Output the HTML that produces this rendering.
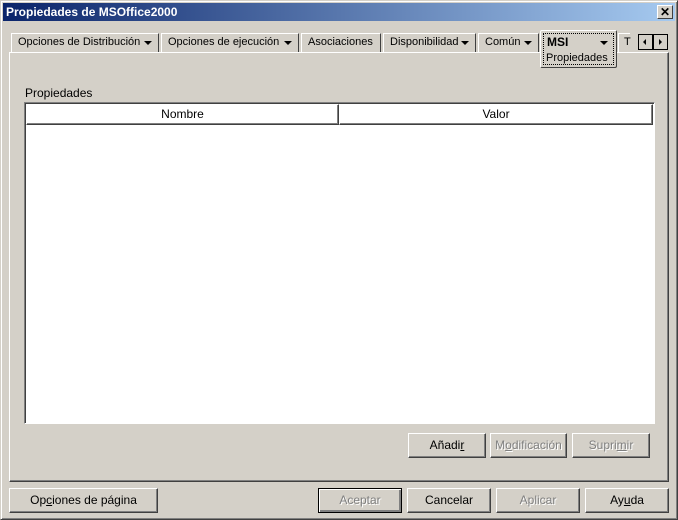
<!DOCTYPE html><html><head><style>
*{box-sizing:border-box;margin:0;padding:0}
body{width:678px;height:520px;background:#d4d0c8;font-family:"Liberation Sans",sans-serif;font-size:11px;color:#000;position:relative;overflow:hidden}
.win{position:absolute;left:0;top:0;width:678px;height:520px;border:1px solid;border-color:#d4d0c8 #404040 #404040 #d4d0c8;box-shadow:inset 1px 1px #fff,inset -1px -1px #808080}
.title{position:absolute;left:3px;top:3px;width:672px;height:18px;background:linear-gradient(90deg,#0a246a,#a6caf0);color:#fff;font-weight:bold;font-size:12px;line-height:18px;padding-left:3px}
.x{position:absolute;right:5px;top:5px;width:16px;height:14px;background:#d4d0c8;border:1px solid;border-color:#fff #404040 #404040 #fff;font-size:12px;line-height:12px;text-align:center;color:#000;font-weight:bold}
.a{position:absolute}
.tab{position:absolute;top:33px;height:19px;border:1px solid;border-color:#fff #404040 transparent #fff;border-bottom:none;line-height:17px;padding-left:6px;white-space:nowrap}
.tri{display:inline-block;width:0;height:0;border-left:4px solid transparent;border-right:4px solid transparent;border-top:4px solid #000;vertical-align:middle;position:absolute;right:6px;top:7px}
.panel{position:absolute;left:9px;top:52px;width:660px;height:430px;border:1px solid;border-color:#fff #404040 #404040 #fff;box-shadow:inset -1px -1px #808080}
.btn{position:absolute;height:25px;border:1px solid;border-color:#fff #404040 #404040 #fff;box-shadow:inset -1px -1px #808080;text-align:center;line-height:22px;font-size:12px}
.dis{color:#808080;text-shadow:1px 1px #fff}
.hd{position:absolute;top:104px;height:21px;border:1px solid;border-color:#fff #404040 #404040 #fff;box-shadow:inset -1px -1px #808080;text-align:center;line-height:19px;font-size:12px}
</style></head><body>
<div class="win"></div>
<div class="title">Propiedades de MSOffice2000</div>
<div class="x">✕</div>
<div class="panel"></div>
<div class="tab" style="left:11px;width:148px">Opciones de Distribución<span class="tri"></span></div>
<div class="tab" style="left:161px;width:138px">Opciones de ejecución<span class="tri"></span></div>
<div class="tab" style="left:301px;width:80px">Asociaciones</div>
<div class="tab" style="left:383px;width:93px">Disponibilidad<span class="tri"></span></div>
<div class="tab" style="left:478px;width:61px">Común<span class="tri"></span></div>
<div class="a" style="left:540px;top:30px;width:77px;height:38px;background:#d4d0c8;border:1px solid;border-color:#fff #404040 #404040 #fff;border-radius:2px"></div>
<div class="a" style="left:543px;top:33px;width:71px;height:32px;border:1px dotted #000"></div>
<div class="a" style="left:547px;top:35px;font-weight:bold;font-size:12px">MSI</div>
<div class="a" style="left:600px;top:41px;border-left:4px solid transparent;border-right:4px solid transparent;border-top:4px solid #000"></div>
<div class="a" style="left:546px;top:52px">Propiedades</div>
<div class="tab" style="left:618px;width:12px;padding-left:5px;border-right:none">T</div>
<div class="a" style="left:638px;top:34px;width:15px;height:16px;border:1px solid #000;background:#d4d0c8"><div class="a" style="left:4px;top:4px;border-top:3px solid transparent;border-bottom:3px solid transparent;border-right:3px solid #000"></div></div>
<div class="a" style="left:653px;top:34px;width:15px;height:16px;border:1px solid #000;background:#d4d0c8"><div class="a" style="left:5px;top:4px;border-top:3px solid transparent;border-bottom:3px solid transparent;border-left:3px solid #000"></div></div>
<div class="a" style="left:25px;top:86px;font-size:12px">Propiedades</div>
<div class="a" style="left:24px;top:102px;width:631px;height:322px;background:#fff;border:1px solid;border-color:#808080 #fff #fff #808080;box-shadow:inset 1px 1px #404040"></div>
<div class="hd" style="left:26px;width:313px">Nombre</div>
<div class="hd" style="left:339px;width:314px">Valor</div>
<div class="btn" style="left:408px;top:433px;width:78px">Añadi<u>r</u></div>
<div class="btn dis" style="left:490px;top:433px;width:77px">M<u>o</u>dificación</div>
<div class="btn dis" style="left:572px;top:433px;width:78px">Supri<u>m</u>ir</div>
<div class="btn" style="left:9px;top:488px;width:149px">Op<u>c</u>iones de página</div>
<div class="btn dis" style="left:318px;top:488px;width:84px;border-color:#000;box-shadow:inset 1px 1px #fff,inset -2px -2px #808080">Aceptar</div>
<div class="btn" style="left:407px;top:488px;width:84px">Cancelar</div>
<div class="btn dis" style="left:496px;top:488px;width:84px">Aplicar</div>
<div class="btn" style="left:585px;top:488px;width:84px">Ay<u>u</u>da</div>
</body></html>
